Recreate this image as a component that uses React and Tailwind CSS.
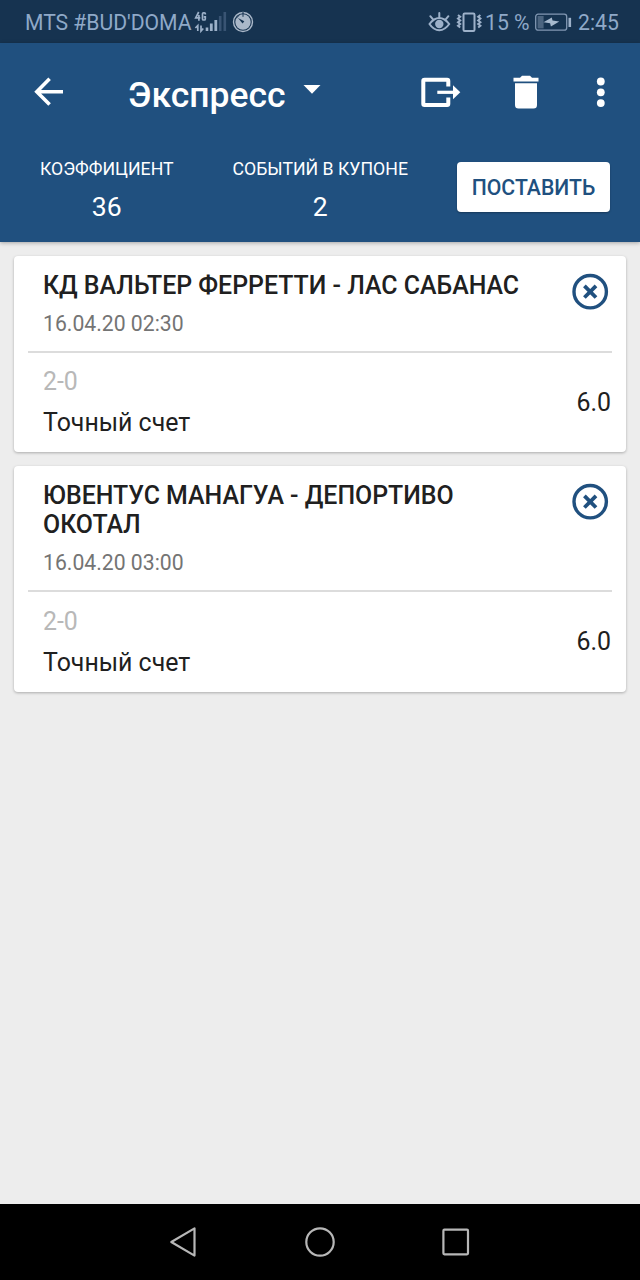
const events = [
  { title: 'КД ВАЛЬТЕР ФЕРРЕТТИ - ЛАС САБАНАС', date: '16.04.20 02:30', pick: '2-0', market: 'Точный счет', odds: '6.0' },
  { title: 'ЮВЕНТУС МАНАГУА - ДЕПОРТИВО ОКОТАЛ', date: '16.04.20 03:00', pick: '2-0', market: 'Точный счет', odds: '6.0' },
];

function StatusBar() {
  return (
    <div className="flex h-[43px] items-center bg-[#163350] pl-[25px] text-[21.2px] leading-[44px] text-[#8fa9c8]">
      <span className="w-[169px] shrink-0 pt-[2px] tracking-[-0.05px] whitespace-nowrap">MTS #BUD'DOMA</span>
      <svg className="h-[24px] w-[34px] shrink-0" viewBox="0 0 34 24" fill="none" stroke="#9db1c9">
        <path d="M4.7 2 1.7 7.9H6.3M4.9 5V10.7M11.3 4.4V3.8Q11.3 2.8 10.3 2.8H9.5Q8.5 2.8 8.5 3.8V9Q8.5 10 9.5 10H10.3Q11.3 10 11.3 9V6.8H9.8" strokeWidth="1.7" />
        <path d="M1.4 18 3.8 15.5V21M7 15.5V21L9.3 18.5" strokeWidth="1.7" />
        <path d="M13 17.5V21" strokeWidth="2.6" />
        <path d="M17.3 13.5V21M21.8 10V21" strokeWidth="2.8" />
        <path d="M26.2 6V21M30.8 2V21" stroke="#395473" strokeWidth="2.6" />
      </svg>
      <svg className="ml-[4px] h-[22px] w-[22px] shrink-0" viewBox="0 0 22 22">
        <circle cx="11" cy="11" r="9.5" fill="none" stroke="#aab8c9" strokeWidth="1.4" />
        <circle cx="11" cy="11" r="7.7" fill="#aab8c9" />
        <path d="M11 1V5.8" stroke="#163350" strokeWidth="1" />
        <path d="m6 7 6.3 3.3-1.7 2.2Z" fill="#163350" />
        <path d="M4 7.5 7 4.4" stroke="#163350" strokeWidth="1" />
      </svg>
      <svg className="ml-[174px] h-[22px] w-[23px] shrink-0" viewBox="0 0 23 22" fill="none" stroke="#9db1c9" strokeWidth="2" strokeLinecap="round">
        <path d="M1.5 13Q6 7 11.3 7T21.2 13Q17 19.2 11.3 19.2T1.5 13ZM11.3 2V6.5M2.3 5.2 5 8.3M20.4 5.2 17.7 8.3" />
        <circle cx="11.3" cy="13" r="4.2" fill="#9db1c9" stroke="none" />
      </svg>
      <svg className="ml-[5px] h-[22px] w-[26px] shrink-0" viewBox="0 0 26 22" fill="none" stroke="#9db1c9" strokeWidth="2">
        <rect x="7.5" y="2.5" width="11" height="17.5" rx="1.2" />
        <path d="M2 4 4.2 5.8 2 7.6 4.2 9.4 2 11.2 4.2 13 2 14.8 4.2 16.6M24.4 4 22.2 5.8 24.4 7.6 22.2 9.4 24.4 11.2 22.2 13 24.4 14.8 22.2 16.6" />
      </svg>
      <span className="ml-[3px] w-[49px] shrink-0 pt-[2px] whitespace-nowrap">15 %</span>
      <svg className="h-[20px] w-[38px] shrink-0" viewBox="0 0 38 20" fill="none" stroke="#8298b3">
        <rect x="1.7" y="2.2" width="31" height="16" rx="2.5" strokeWidth="1.3" />
        <rect x="3.6" y="4" width="6" height="12.4" fill="#4c6580" stroke="none" />
        <path d="M35.8 5.8V15" stroke="#9db1c9" strokeWidth="2.6" />
        <path d="M9.5 10.3 17.8 5.4l.7 3.2 6.8 1-8.4 5-.8-3.3Z" fill="#a7b9cd" stroke="none" />
      </svg>
      <span className="ml-[6px] shrink-0 pt-[2px] whitespace-nowrap">2:45</span>
    </div>
  );
}

function Header() {
  return (
    <header className="relative h-[199px] bg-[#20507f] text-white shadow-[0_1px_4px_rgba(0,0,0,0.3)]">
      <div className="flex h-[98px] items-center pl-[34px]">
        <svg className="h-[30px] w-[30px] shrink-0" viewBox="0 0 30 30" fill="none" stroke="white" strokeWidth="3.6">
          <path d="M15.6 1.8 2.8 14.7 15.6 27.6M2.8 14.7H29" />
        </svg>
        <h1 className="ml-[64px] w-[175px] shrink-0 pt-[6px] text-[35.5px] leading-[42px] font-medium whitespace-nowrap">Экспресс</h1>
        <svg className="mb-[5px] h-[9px] w-[18px] shrink-0" viewBox="0 0 18 9" fill="white"><path d="M.5 0H17.5L9 8.8Z" /></svg>
        <svg className="ml-[99px] h-[32px] w-[42px] shrink-0" viewBox="0 0 42 32" fill="none" stroke="white">
          <path d="M28.3 10.4V5Q28.3 3.8 27.1 3.8H4.5Q3.3 3.8 3.3 5V27.7Q3.3 28.9 4.5 28.9H27.1Q28.3 28.9 28.3 27.7V21.5" strokeWidth="4" strokeLinejoin="round" />
          <path d="M17.3 16.3H35" strokeWidth="3.2" />
          <path d="M33 9.3 40.3 16.3 33 23.3Z" fill="white" stroke="none" />
        </svg>
        <svg className="ml-[51px] h-[34px] w-[26px] shrink-0" viewBox="0 0 26 34" fill="white">
          <path d="M.5 2.8H7L9 .8H17L19 2.8H25.5V6.5H.5ZM2 8.2H24V30Q24 33.5 20.5 33.5H5.5Q2 33.5 2 30Z" />
        </svg>
        <svg className="ml-[57px] h-[30px] w-[9px] shrink-0" viewBox="0 0 9 30" fill="white">
          <circle cx="4.8" cy="4.5" r="3.9" /><circle cx="4.8" cy="15.3" r="3.9" /><circle cx="4.8" cy="26.1" r="3.9" />
        </svg>
      </div>
      <div className="flex items-start">
        <div className="w-[213.5px] pt-[18px] text-center">
          <div className="text-[17.7px] leading-[21px] whitespace-nowrap">КОЭФФИЦИЕНТ</div>
          <div className="mt-[11px] text-[26.6px] leading-[32px]">36</div>
        </div>
        <div className="w-[213.5px] pt-[18px] text-center">
          <div className="text-[17.7px] leading-[21px] whitespace-nowrap">СОБЫТИЙ В КУПОНЕ</div>
          <div className="mt-[11px] text-[26.6px] leading-[32px]">2</div>
        </div>
        <button className="mt-[21px] ml-[30px] h-[50px] w-[153px] rounded-[4px] bg-white pt-[1px] text-[21.2px] leading-[50px] font-medium whitespace-nowrap text-[#20507f] shadow-[0_1px_2px_rgba(0,0,0,0.3)]">ПОСТАВИТЬ</button>
      </div>
    </header>
  );
}

function EventCard({ event }) {
  return (
    <article className="rounded-[4px] bg-white px-[14px] pt-[14.5px] pb-[15px] shadow-[0_1px_3px_rgba(0,0,0,0.28)]">
      <div className="flex items-start justify-between pr-[3px] pb-[15px] pl-[15px]">
        <div className="w-[490px]">
          <h2 className="text-[24.9px] leading-[29.2px] font-medium">{event.title}</h2>
          <div className="mt-[12px] text-[21.2px] leading-[24px] text-[#747474]">{event.date}</div>
        </div>
        <button className="mt-[2px]" aria-label="Удалить">
          <svg className="h-[37px] w-[37px]" viewBox="0 0 37 37" fill="none" stroke="#20507f">
            <circle cx="18.2" cy="18.7" r="16.2" strokeWidth="3.4" />
            <path d="m12.4 12.9 11.6 11.6M24 12.9 12.4 24.5" strokeWidth="3.8" />
          </svg>
        </button>
      </div>
      <div className="h-[2px] bg-[#dcdcdc]" />
      <div className="flex items-center justify-between pt-[14.5px] pr-[1px] pl-[15px] text-[24.9px] leading-[29px]">
        <div>
          <div className="text-[#b8b8b8]">{event.pick}</div>
          <div className="mt-[12px]">{event.market}</div>
        </div>
        <div>{event.odds}</div>
      </div>
    </article>
  );
}

function NavigationBar() {
  return (
    <nav className="flex h-[76px] items-center bg-black pl-[169px]">
      <svg className="h-[32px] w-[28px]" viewBox="0 0 28 32" fill="none" stroke="#b7b7b7" strokeWidth="2.2" strokeLinejoin="round"><path d="M25.5 2.4V29.6L2.3 16Z" /></svg>
      <svg className="ml-[107px] h-[32px] w-[32px]" viewBox="0 0 32 32" fill="none" stroke="#b7b7b7" strokeWidth="2.2"><circle cx="16" cy="16" r="13.7" /></svg>
      <svg className="ml-[105px] h-[30px] w-[30px]" viewBox="0 0 30 30" fill="none" stroke="#b7b7b7" strokeWidth="2.2"><rect x="2.4" y="2.7" width="24.6" height="24.6" rx="1" /></svg>
    </nav>
  );
}

export default function App() {
  return (
    <div className="flex h-[1280px] w-[640px] flex-col overflow-hidden bg-[#ededed] font-['Roboto',sans-serif] text-[#202020]">
      <StatusBar />
      <Header />
      <main className="flex flex-1 flex-col gap-[14px] px-[14px] pt-[14px]">
        {events.map((event) => <EventCard key={event.title} event={event} />)}
      </main>
      <NavigationBar />
    </div>
  );
}
